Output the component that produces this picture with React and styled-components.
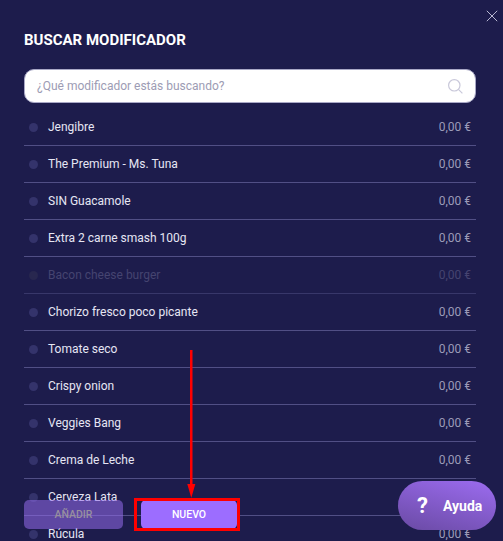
import React from "react";
import styled, { createGlobalStyle } from "styled-components";

const Global = createGlobalStyle`
  html, body { margin: 0; padding: 0; height: 100%; overflow: hidden; background: #1d1c4c; }
  body { font-family: Roboto, "Liberation Sans", sans-serif; }
`;
const Modal = styled.div`
  position: relative; width: 503px; height: 541px; overflow: hidden;
  background: #1d1c4c; padding: 30px 27px 0 24px; box-sizing: border-box;
`;
const Close = styled.button`
  position: absolute; top: 10px; right: 5px; width: 12px; height: 12px; padding: 0;
  border: 0; background: none; color: #b9b8d2; display: flex;
`;
const Title = styled.h1`
  margin: 0; font-size: 15px; line-height: 20px; font-weight: 700; color: #fff; text-transform: uppercase;
`;
const Search = styled.div`
  margin-top: 19px; height: 34px; box-sizing: border-box; border-radius: 10px; background: #fff;
  border: 1px solid #a9a8c6; display: flex; align-items: center;
  justify-content: space-between; padding: 0 12px 0 12px;
`;
const Placeholder = styled.span`font-size: 12px; color: #9d9cb4;`;
const List = styled.ul`margin: 6px 0 0; padding: 0; list-style: none;`;
const Row = styled.li`
  height: 36px; display: flex; align-items: center; padding: 0 5px;
  border-bottom: 1px solid ${p => p.$muted ? "#38376a" : "#514f85"};
  font-size: 12px;
  &:last-child { border-bottom: 0; }
`;
const Dot = styled.span`
  width: 9px; height: 9px; border-radius: 50%; margin-right: 10px; flex: none;
  background: ${p => p.$muted ? "#28274f" : "#34336b"};
`;
const Name = styled.span`flex: 1; color: ${p => p.$muted ? "#454470" : "#e6e6f4"};`;
const Price = styled.span`color: ${p => p.$muted ? "#454470" : "#9c9bb8"};`;
const Footer = styled.div`
  position: absolute; left: 24px; top: 500px; display: flex; gap: 18px;
`;
const Action = styled.button`
  position: relative; height: 29px; border: 0; border-radius: 5px; padding: 0;
  font: 500 10.5px Roboto, sans-serif; text-transform: uppercase;
`;
const Add = styled(Action)`
  width: 99px; background: rgba(147, 107, 235, 0.55); color: #98909f;
`;
const New = styled(Action)`
  width: 96px; background: #9c6dff; color: #fff;
  &::after {
    content: ""; position: absolute; inset: -2px -3px -2px -7px;
    border: 3px solid #ff0000;
  }
`;
const Arrow = styled.svg`position: absolute; left: 185px; top: 350px;`;
const Help = styled.button`
  position: absolute; left: 398px; top: 481px; width: 98px; height: 49px; border: 0;
  border-radius: 25px; background: linear-gradient(195deg, #9c6cf0, #6a4aa4);
  color: #fff; display: flex; align-items: center; padding: 0 0 0 19px; gap: 15px;
  font: 700 14px Roboto, sans-serif;
`;
const Mark = styled.span`font-size: 22px; font-weight: 700;`;

const items = ["Jengibre","The Premium - Ms. Tuna","SIN Guacamole","Extra 2 carne smash 100g","Bacon cheese burger","Chorizo fresco poco picante","Tomate seco","Crispy onion","Veggies Bang","Crema de Leche","Cerveza Lata","Rúcula"];

export default function App() {
  return (
    <>
      <Global />
      <Modal>
        <Close aria-label="Cerrar">
          <svg width="12" height="12" viewBox="0 0 12 12" fill="none" stroke="currentColor" strokeWidth="1"><path d="M.8.8l10.4 10.4M11.2.8L.8 11.2" /></svg>
        </Close>
        <Title>Buscar modificador</Title>
        <Search>
          <Placeholder>¿Qué modificador estás buscando?</Placeholder>
          <svg width="15" height="15" viewBox="0 0 15 15" fill="none" stroke="#c9c8da" strokeWidth="1.2"><circle cx="6.3" cy="6.3" r="5.7" /><path d="M10.4 10.4l4 4" /></svg>
        </Search>
        <List>
          {items.map((n, i) => {
            const muted = i === 4;
            return (
              <Row key={n} $muted={muted}>
                <Dot $muted={muted} />
                <Name $muted={muted}>{n}</Name>
                <Price $muted={muted}>0,00 €</Price>
              </Row>
            );
          })}
        </List>
        <Footer>
          <Add>Añadir</Add>
          <New>Nuevo</New>
        </Footer>
        <Arrow width="14" height="150" viewBox="0 0 14 150" fill="#f00">
          <rect x="5" y="0" width="2.5" height="136" />
          <path d="M2.3 134h8l-4 14z" />
        </Arrow>
        <Help><Mark>?</Mark>Ayuda</Help>
      </Modal>
    </>
  );
}
